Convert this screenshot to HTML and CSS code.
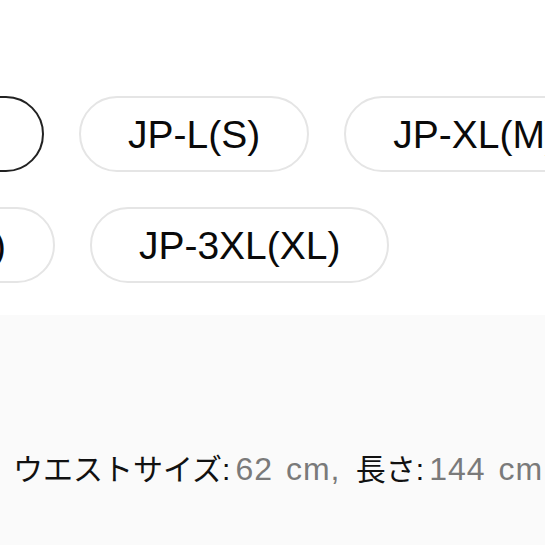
FILE: index.html
```html
<!DOCTYPE html>
<html lang="ja">
<head>
<meta charset="utf-8">
<link rel="stylesheet" href="styles.css">
</head>
<body>
<div class="page">
  <section class="sizes">
    <div class="size-list">
      <button class="size-pill is-selected">JP-M(XS)</button>
      <button class="size-pill">JP-L(S)</button>
      <button class="size-pill">JP-XL(M)</button>
      <button class="size-pill">JP-XXL(L)</button>
      <button class="size-pill">JP-3XL(XL)</button>
    </div>
  </section>
  <section class="details">
    <p class="measure"><span class="label">ウエストサイズ:</span><span class="value">62 cm,</span> <span class="label label-next">長さ:</span><span class="value">144 cm</span></p>
  </section>
</div>
</body>
</html>
```

FILE: styles.css
```css
html, body {
  margin: 0;
  padding: 0;
  background: #ffffff;
  overflow: hidden;
}
body {
  width: 545px;
  height: 545px;
  font-family: "Liberation Sans", "Noto Sans CJK JP", sans-serif;
  color: #111111;
}
.page {
  display: flex;
  flex-direction: column;
  height: 545px;
}
.sizes {
  background: #ffffff;
  padding: 96px 0 32px 0;
  overflow: hidden;
}
.size-list {
  display: flex;
  flex-wrap: wrap;
  gap: 35px;
  width: 900px;
  margin-left: -223px;
}
.size-pill {
  box-sizing: border-box;
  height: 76px;
  padding: 0 47px;
  border: 2px solid #e5e5e5;
  border-radius: 38px;
  background: #ffffff;
  font-family: "Liberation Sans", sans-serif;
  font-size: 39px;
  line-height: 1;
  color: #0a0a0a;
  display: flex;
  align-items: center;
  justify-content: center;
  white-space: nowrap;
}
.size-pill.is-selected {
  border-color: #222222;
}
.details {
  flex: 1;
  background: #fafafa;
  padding: 134px 0 0 13px;
}
.measure {
  margin: 0;
  font-size: 30px;
  line-height: 40px;
  white-space: nowrap;
}
.label {
  color: #111111;
}
.label-next {
  margin-left: 7px;
}
.value {
  color: #7a7a7a;
  margin-left: 5px;
  font-size: 32px;
  letter-spacing: 1px;
  word-spacing: 3px;
}
```
